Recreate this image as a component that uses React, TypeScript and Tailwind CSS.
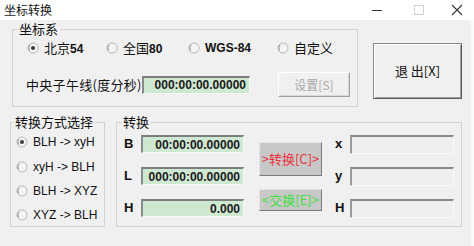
const cjk = "font-['SimSun','Noto_Sans_CJK_SC',sans-serif]";
const lat = "font-['Liberation_Sans','Noto_Sans_CJK_SC',sans-serif]";

function Radio({ checked }: { checked?: boolean }) {
  return (
    <svg width="12" height="12" viewBox="0 0 12 12" className="shrink-0">
      <circle cx="6" cy="6" r="5" fill="#f4f4f4" stroke="#b4bab4" strokeWidth="1" />
      <path d="M2.5 8.5 A5 5 0 0 1 3 2.8" stroke="#8f968f" strokeWidth="1" fill="none" />
      {checked ? <circle cx="6" cy="6" r="2" fill="#3a3a3a" /> : null}
    </svg>
  );
}

const sunkenGreen =
  'flex items-center justify-end border-t-2 border-l-2 border-t-[#7c7c7c] border-l-[#8a8a8a] border-r border-b border-r-[#f8f8f8] border-b-[#f8f8f8] bg-[#cfe8d2] pr-[3px] text-[12px] font-bold text-[#1a1a1a]';
const sunkenGrey =
  'border-t-2 border-l-2 border-t-[#8a8a8a] border-l-[#9a9a9a] border-r border-b border-r-[#fafafa] border-b-[#fafafa] bg-[#eeeeee]';

export default function App() {
  return (
    <div className={`w-[474px] h-[246px] bg-[#fbfbfb] ${cjk} text-[#111]`}>
      {/* title bar */}
      <div className="flex h-[20px] items-center justify-between bg-white pl-[4px]">
        <span className="text-[12px] leading-none">坐标转换</span>
        <div className="flex h-full items-center">
          <svg width="46" height="20" viewBox="0 0 46 20">
            <line x1="18" y1="10.5" x2="28" y2="10.5" stroke="#333" strokeWidth="1" />
          </svg>
          <svg width="38" height="20" viewBox="0 0 38 20">
            <rect x="14.5" y="5.5" width="9" height="9" fill="none" stroke="#cfcfcf" strokeWidth="1" />
          </svg>
          <svg width="36" height="20" viewBox="0 0 36 20">
            <path d="M14 5 L24 15 M24 5 L14 15" stroke="#333" strokeWidth="1.1" />
          </svg>
        </div>
      </div>

      {/* body */}
      <div className="h-[226px] w-[471px] bg-[#f0f0f0] pt-[1px]">
        <div className="flex">
          <fieldset className="ml-[12px] h-[86px] w-[346px] border border-[#d2d2d2]">
            <legend className="ml-[4px] px-[2px] text-[13px] leading-[16px]">坐标系</legend>
            <div className="mt-[3px] flex h-[16px] items-center text-[13px]">
              <label className="ml-[14px] flex w-[79px] items-center gap-[5px]">
                <Radio checked />
                <span>北京<b className={`${lat} text-[12px]`}>54</b></span>
              </label>
              <label className="flex w-[82px] items-center gap-[5px]">
                <Radio />
                <span>全国<b className={`${lat} text-[12px]`}>80</b></span>
              </label>
              <label className="flex w-[89px] items-center gap-[5px]">
                <Radio />
                <b className={`${lat} text-[12px]`}>WGS-84</b>
              </label>
              <label className="flex items-center gap-[5px]">
                <Radio />
                <span>自定义</span>
              </label>
            </div>
            <div className="mt-[16px] flex h-[25px] items-center">
              <span className="ml-[13px] w-[116px] text-[13px] tracking-[0.3px]">中央子午线(度分秒)</span>
              <div className={`${sunkenGreen} ${lat} h-[18px] w-[108px]`}>000:00:00.00000</div>
              <button className="ml-[28px] flex h-[25px] w-[72px] items-center justify-center border border-t-white border-l-white border-r-[#a0a0a0] border-b-[#a0a0a0] bg-[#f0f0f0] text-[12px] text-[#a8a8a8] shadow-[inset_-1px_-1px_0_#d8d8d8]">
                设置[S]
              </button>
            </div>
          </fieldset>
          <button className="ml-[15px] mt-[22px] flex h-[56px] w-[89px] items-center justify-center border border-t-[#8a8a8a] border-l-[#8a8a8a] border-r-[#5a5a5a] border-b-[#5a5a5a] bg-[#f0f0f0] text-[13px] shadow-[inset_1px_1px_0_#ffffff,inset_-1px_-1px_0_#a0a0a0]">
            退 出[X]
          </button>
        </div>

        <div className="mt-[7px] flex">
          <fieldset className="ml-[10px] h-[113px] w-[95px] border border-[#d2d2d2]">
            <legend className="ml-[2px] px-[2px] text-[13px] leading-[16px]">转换方式选择</legend>
            <div className={`${lat} ml-[5px] flex flex-col text-[12px]`}>
              <label className="mt-[4px] flex h-[16px] items-center gap-[5px]">
                <Radio checked />
                <span>BLH -&gt; xyH</span>
              </label>
              <label className="mt-[9px] flex h-[16px] items-center gap-[5px]">
                <Radio />
                <span>xyH -&gt; BLH</span>
              </label>
              <label className="mt-[8px] flex h-[16px] items-center gap-[5px]">
                <Radio />
                <span>BLH -&gt; XYZ</span>
              </label>
              <label className="mt-[8px] flex h-[16px] items-center gap-[5px]">
                <Radio />
                <span>XYZ -&gt; BLH</span>
              </label>
            </div>
          </fieldset>

          <fieldset className="ml-[11px] h-[113px] w-[346px] border border-[#d2d2d2]">
            <legend className="ml-[4px] px-[2px] text-[13px] leading-[16px]">转换</legend>
            <div className="flex">
              <div className={`${lat} ml-[7px] mt-[5px] flex flex-col gap-[14px]`}>
                {[
                  ['B', '00:00:00.00000'],
                  ['L', '000:00:00.00000'],
                  ['H', '0.000'],
                ].map(([k, v]) => (
                  <div key={k} className="flex h-[18px] items-center">
                    <b className="w-[17px] text-[13px]">{k}</b>
                    <div className={`${sunkenGreen} h-[18px] w-[103px]`}>{v}</div>
                  </div>
                ))}
              </div>
              <div className="ml-[15px] mt-[12px] flex flex-col gap-[13px]">
                <button className="flex h-[34px] w-[63px] items-center justify-center border border-t-[#e4e4e4] border-l-[#e4e4e4] border-r-[#7a7a7a] border-b-[#7a7a7a] bg-[#c8c8c8] text-[13px] text-[#e8323c]">
                  &gt;转换[C]&gt;
                </button>
                <button className="flex h-[22px] w-[63px] items-center justify-center border border-t-[#e4e4e4] border-l-[#e4e4e4] border-r-[#7a7a7a] border-b-[#7a7a7a] bg-[#c8c8c8] text-[13px] text-[#3ee03e]">
                  &lt;交换[E]&gt;
                </button>
              </div>
              <div className={`${lat} ml-[13px] mt-[5px] flex flex-col gap-[14px]`}>
                {['x', 'y', 'H'].map((k) => (
                  <div key={k} className="flex h-[18px] items-center">
                    <b className="w-[15px] text-[13px]">{k}</b>
                    <div className={`${sunkenGrey} h-[19px] w-[104px]`} />
                  </div>
                ))}
              </div>
            </div>
          </fieldset>
        </div>
      </div>
    </div>
  );
}
